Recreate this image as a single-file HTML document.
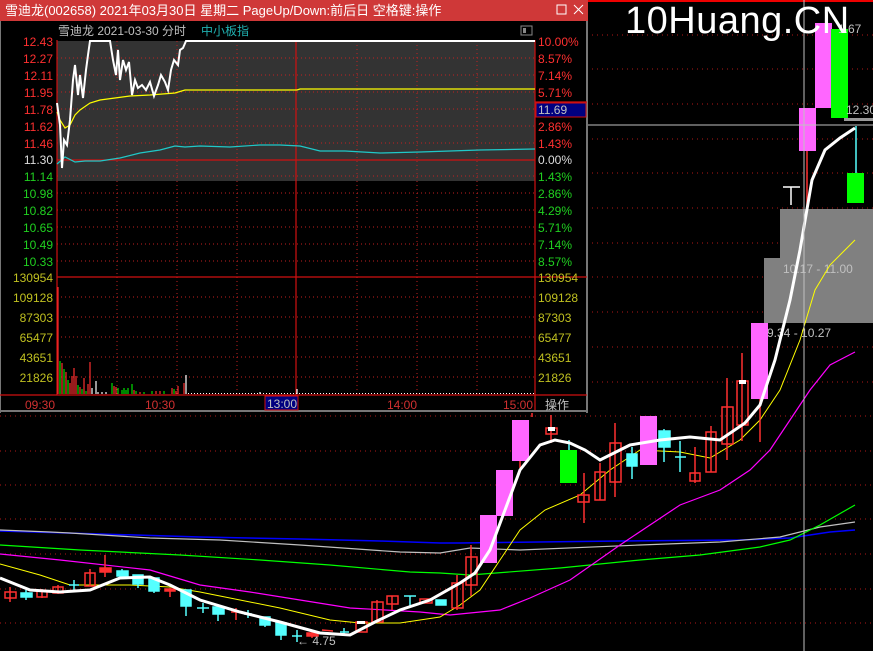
<!DOCTYPE html>
<html><head><meta charset="utf-8"><style>
html,body{margin:0;padding:0;background:#000;width:873px;height:651px;overflow:hidden}
svg{display:block}
text{font-family:"Liberation Sans","Noto Sans CJK SC",sans-serif}
</style></head><body>
<svg width="873" height="651" viewBox="0 0 873 651" xmlns="http://www.w3.org/2000/svg">
<rect width="873" height="651" fill="#000"/>
<line x1="587" y1="1" x2="873" y2="1" stroke="#e00" stroke-width="2"/>
<g stroke="#b01818" stroke-width="1" stroke-dasharray="1,4">
<line x1="587" y1="35" x2="873" y2="35"/><line x1="587" y1="69" x2="873" y2="69"/><line x1="587" y1="104" x2="873" y2="104"/><line x1="587" y1="139" x2="873" y2="139"/><line x1="587" y1="173" x2="873" y2="173"/><line x1="587" y1="208" x2="873" y2="208"/><line x1="587" y1="243" x2="873" y2="243"/><line x1="587" y1="277" x2="873" y2="277"/><line x1="587" y1="312" x2="873" y2="312"/><line x1="587" y1="347" x2="873" y2="347"/><line x1="587" y1="382" x2="873" y2="382"/>
<line x1="0" y1="416" x2="873" y2="416"/><line x1="0" y1="451" x2="873" y2="451"/><line x1="0" y1="485" x2="873" y2="485"/><line x1="0" y1="519" x2="873" y2="519"/><line x1="0" y1="554" x2="873" y2="554"/><line x1="0" y1="589" x2="873" y2="589"/><line x1="0" y1="623" x2="873" y2="623"/>
</g>
<rect x="780" y="209" width="93" height="49" fill="#808080"/>
<rect x="764" y="258" width="109" height="65" fill="#808080"/>
<text x="783" y="273" font-size="12" fill="#c0c0c0">10.17 - 11.00</text>
<text x="767" y="337" font-size="12" fill="#c0c0c0">9.34 - 10.27</text>
<g fill="none">
<polyline stroke="#0000ff" stroke-width="1.5" points="0,531 100,534 200,537 300,539 380,541 440,543 460,543 620,541 740,540 790,538 830,532 855,530"/>
<polyline stroke="#c0c0c0" stroke-width="1.2" points="0,530 50,532 70,533 150,538 220,540 300,545 400,552 440,553 470,548 520,550 640,545 720,542 780,537 820,527 855,522"/>
<polyline stroke="#00ff00" stroke-width="1.2" points="0,545 80,550 180,555 260,560 330,565 410,572 440,573 470,575 560,568 640,560 700,555 760,547 790,540 820,525 855,505"/>
<polyline stroke="#ff00ff" stroke-width="1.2" points="0,554 60,560 150,570 200,585 250,592 300,600 350,608 420,612 450,615 480,612 500,610 530,598 570,580 620,545 680,505 720,490 750,470 770,450 790,420 810,390 830,365 855,352"/>
<polyline stroke="#ffff00" stroke-width="1" points="0,564 40,575 70,585 130,585 170,587 200,592 240,600 280,608 330,620 360,623 400,623 440,617 460,605 480,590 500,560 520,530 545,510 580,495 610,470 640,450 680,452 710,458 740,440 760,420 780,390 800,340 815,290 830,265 845,250 855,240"/>
</g>
<g stroke-width="1.5">
<g stroke="#ff3030" fill="none">
<line x1="10" y1="587" x2="10" y2="602"/><rect x="5" y="592" width="11" height="6"/>
<line x1="42" y1="589" x2="42" y2="598"/><rect x="37" y="591" width="10" height="6"/>
<line x1="58" y1="585" x2="58" y2="594"/><rect x="53" y="587" width="10" height="6"/>
<line x1="90" y1="569" x2="90" y2="586"/><rect x="85" y="573" width="10" height="13"/>
<line x1="105" y1="555" x2="105" y2="577"/><rect x="100" y="568" width="11" height="4" fill="#ff3030"/>
<line x1="170" y1="588" x2="170" y2="597"/><rect x="165" y="589" width="10" height="2" fill="#ff3030"/>
<line x1="236" y1="608" x2="236" y2="620"/><line x1="231" y1="612" x2="242" y2="612"/>
<line x1="312" y1="632" x2="312" y2="638"/><rect x="307" y="633" width="11" height="3" fill="#ff3030"/>
<line x1="322" y1="630" x2="333" y2="631"/>
<rect x="356" y="622" width="11" height="10"/>
<line x1="377" y1="600" x2="377" y2="622"/><rect x="372" y="602" width="11" height="20"/>
<line x1="392" y1="596" x2="392" y2="610"/><rect x="387" y="596" width="11" height="8"/>
<rect x="420" y="599" width="12" height="4"/>
<line x1="457" y1="575" x2="457" y2="610"/><rect x="452" y="583" width="11" height="25"/>
<line x1="471" y1="545" x2="471" y2="596"/><rect x="466" y="557" width="11" height="28"/>
<line x1="551" y1="415" x2="551" y2="443"/><rect x="546" y="428" width="11" height="6"/>
<line x1="584" y1="473" x2="584" y2="523"/><rect x="578" y="495" width="11" height="7"/>
<line x1="600" y1="463" x2="600" y2="500"/><rect x="595" y="472" width="10" height="28"/>
<line x1="615" y1="423" x2="615" y2="497"/><rect x="610" y="443" width="11" height="39"/>
<line x1="695" y1="447" x2="695" y2="483"/><rect x="690" y="473" width="10" height="8"/>
<line x1="711" y1="426" x2="711" y2="472"/><rect x="706" y="432" width="10" height="40"/>
<line x1="727" y1="378" x2="727" y2="460"/><rect x="722" y="407" width="11" height="37"/>
<line x1="742" y1="353" x2="742" y2="441"/><rect x="737" y="381" width="11" height="44"/>
<line x1="760" y1="399" x2="760" y2="442"/>
<line x1="807" y1="151" x2="807" y2="209"/>
</g>
<g fill="#fff" stroke="none">
<rect x="357" y="621" width="8" height="3"/><rect x="548" y="427" width="7" height="4"/><rect x="739" y="380" width="7" height="4"/>
</g>
<g stroke="#55ffff" fill="#55ffff">
<line x1="26" y1="590" x2="26" y2="600"/><rect x="21" y="593" width="11" height="4"/>
<line x1="74" y1="580" x2="74" y2="590"/><line x1="69" y1="585" x2="79" y2="585"/>
<line x1="122" y1="569" x2="122" y2="579"/><rect x="117" y="571" width="11" height="5"/>
<line x1="138" y1="575" x2="138" y2="588"/><rect x="133" y="575" width="10" height="9"/>
<line x1="154" y1="578" x2="154" y2="593"/><rect x="149" y="578" width="10" height="13"/>
<line x1="186" y1="590" x2="186" y2="616"/><rect x="181" y="590" width="10" height="16"/>
<line x1="203" y1="603" x2="203" y2="613"/><line x1="197" y1="608" x2="209" y2="608"/>
<line x1="218" y1="607" x2="218" y2="621"/><rect x="213" y="607" width="11" height="7"/>
<line x1="248" y1="610" x2="248" y2="618"/><line x1="244" y1="614" x2="252" y2="614"/>
<line x1="265" y1="617" x2="265" y2="627"/><rect x="260" y="617" width="10" height="8"/>
<line x1="281" y1="623" x2="281" y2="640"/><rect x="276" y="623" width="10" height="12"/>
<line x1="297" y1="630" x2="297" y2="642"/><line x1="292" y1="636" x2="302" y2="636"/>
<line x1="344" y1="628" x2="344" y2="636"/><line x1="340" y1="632" x2="349" y2="632"/>
<line x1="410" y1="596" x2="410" y2="607"/><line x1="404" y1="596" x2="416" y2="596"/>
<rect x="436" y="600" width="10" height="5"/>
<line x1="632" y1="447" x2="632" y2="479"/><rect x="627" y="454" width="10" height="12"/>
<line x1="664" y1="429" x2="664" y2="462"/><rect x="659" y="431" width="11" height="16"/>
<line x1="680" y1="441" x2="680" y2="472"/><line x1="675" y1="457" x2="686" y2="457"/>
<line x1="856" y1="126" x2="856" y2="173"/>
<line x1="569" y1="440" x2="569" y2="450"/>
</g>
<g fill="#ff66ff" stroke="none">
<rect x="480" y="515" width="17" height="48"/>
<rect x="496" y="470" width="17" height="46"/>
<rect x="512" y="420" width="17" height="41"/>
<rect x="640" y="416" width="17" height="49"/>
<rect x="751" y="323" width="17" height="76"/>
<rect x="799" y="108" width="17" height="43"/>
<rect x="815" y="23" width="17" height="85"/>
</g>
<g stroke="#ff3030"><line x1="520" y1="461" x2="520" y2="468"/><line x1="532" y1="412" x2="532" y2="417"/></g>
<g fill="#00ff00" stroke="none">
<rect x="560" y="450" width="17" height="33"/>
<rect x="831" y="29" width="17" height="89"/>
<rect x="847" y="173" width="17" height="30"/>
</g>
</g>
<line x1="783" y1="187" x2="800" y2="187" stroke="#fff" stroke-width="1.5"/><line x1="791" y1="187" x2="791" y2="205" stroke="#fff" stroke-width="1.5"/>
<polyline fill="none" stroke="#fff" stroke-width="3" points="0,578 30,590 60,592 90,590 120,578 150,577 170,585 200,600 240,612 280,622 320,633 350,635 375,622 400,610 430,600 460,583 475,573 490,550 505,510 520,470 540,445 555,440 570,443 585,450 600,460 610,455 630,445 660,440 690,437 720,440 745,423 760,405 775,360 790,300 800,250 812,180 825,150 840,138 855,128"/>
<line x1="804" y1="0" x2="804" y2="651" stroke="#c0c0c0" stroke-width="1"/>
<line x1="587" y1="125" x2="873" y2="125" stroke="#c0c0c0" stroke-width="1"/>
<rect x="844" y="118" width="29" height="3" fill="#999"/>
<text x="846" y="114" font-size="12" fill="#c0c0c0">12.30</text>
<text x="838" y="33" font-size="12" fill="#c0c0c0">1.67</text>
<text x="297" y="645" font-size="12" fill="#c0c0c0">← 4.75</text>
<text x="625" y="33" font-size="38" fill="#fff" letter-spacing="0.5">10Huang.CN</text>

<rect x="0" y="0" width="588" height="413" fill="#000"/>
<rect x="0" y="0" width="588" height="21" fill="#cf3838"/>
<text x="5" y="15" font-size="13" fill="#fff">雪迪龙(002658)  2021年03月30日  星期二  PageUp/Down:前后日  空格键:操作</text>
<rect x="557" y="5" width="9" height="9" fill="none" stroke="#fff" stroke-width="1"/>
<path d="M574 5 L583 14 M583 5 L574 14" stroke="#fff" stroke-width="1"/>
<rect x="586" y="21" width="2" height="392" fill="#777"/>
<rect x="0" y="410" width="588" height="2" fill="#777"/>
<rect x="0" y="21" width="1" height="392" fill="#777"/>
<text x="58" y="35" font-size="12" fill="#c0c0c0">雪迪龙  2021-03-30 分时</text>
<text x="201" y="35" font-size="12" fill="#20b0b0">中小板指</text>
<rect x="521" y="26" width="11" height="9" fill="none" stroke="#888"/><rect x="523" y="28" width="3" height="5" fill="#888"/>
<rect x="57" y="41" width="478" height="140" fill="#333"/>
<g stroke="#c02020" stroke-width="1" stroke-dasharray="1,3">
<line x1="57" y1="58" x2="535" y2="58"/><line x1="57" y1="75" x2="535" y2="75"/><line x1="57" y1="92" x2="535" y2="92"/><line x1="57" y1="109" x2="535" y2="109"/><line x1="57" y1="126" x2="535" y2="126"/><line x1="57" y1="143" x2="535" y2="143"/><line x1="57" y1="176" x2="535" y2="176"/><line x1="57" y1="193" x2="535" y2="193"/><line x1="57" y1="210" x2="535" y2="210"/><line x1="57" y1="227" x2="535" y2="227"/><line x1="57" y1="244" x2="535" y2="244"/><line x1="57" y1="261" x2="535" y2="261"/>
<line x1="57" y1="297" x2="535" y2="297"/><line x1="57" y1="317" x2="535" y2="317"/><line x1="57" y1="337" x2="535" y2="337"/><line x1="57" y1="357" x2="535" y2="357"/><line x1="57" y1="377" x2="535" y2="377"/>
<line x1="117" y1="41" x2="117" y2="394"/><line x1="177" y1="41" x2="177" y2="394"/><line x1="237" y1="41" x2="237" y2="394"/><line x1="357" y1="41" x2="357" y2="394"/><line x1="417" y1="41" x2="417" y2="394"/><line x1="477" y1="41" x2="477" y2="394"/>
</g>
<g stroke="#d01010" stroke-width="1.2">
<line x1="57" y1="160" x2="535" y2="160"/><line x1="57" y1="277" x2="587" y2="277"/><line x1="0" y1="395" x2="587" y2="395"/>
<line x1="57" y1="40" x2="57" y2="395"/><line x1="535" y1="40" x2="535" y2="410"/><line x1="296" y1="41" x2="296" y2="395"/>
<line x1="535" y1="102" x2="587" y2="102"/>
</g>
<polyline fill="none" stroke="#ffff00" stroke-width="1.2" points="57,112 60,120 65,128 70,125 75,115 80,110 90,103 100,100 115,98 130,96 150,95 175,93 185,90 297,90 300,89 535,89"/>
<polyline fill="none" stroke="#20c8c8" stroke-width="1.2" points="57,164 65,157 75,162 85,161 100,161 120,158 140,153 160,150 175,146 185,147 200,146 230,147 260,145 280,145 300,146 320,151 345,151 380,153 420,152 450,151 480,150 535,149"/>
<polyline fill="none" stroke="#fff" stroke-width="2" points="57,103 60,125 62,168 64,140 67,145 70,120 73,80 75,65 78,95 80,75 83,98 86,70 88,55 90,41 110,41 113,60 116,75 118,50 120,80 123,60 126,70 129,62 132,95 135,80 138,88 142,85 146,90 150,82 154,96 158,85 161,75 165,82 168,90 171,70 174,60 178,65 180,50 183,48 186,41 535,41"/>
<g stroke-width="1.2">
<g stroke="#ff3030"><line x1="58" y1="394" x2="58" y2="287"/><line x1="62" y1="394" x2="62" y2="363"/><line x1="66" y1="394" x2="66" y2="372"/><line x1="70" y1="394" x2="70" y2="383"/><line x1="72" y1="394" x2="72" y2="376"/><line x1="74" y1="394" x2="74" y2="368"/><line x1="76" y1="394" x2="76" y2="376"/><line x1="80" y1="394" x2="80" y2="387"/><line x1="84" y1="394" x2="84" y2="378"/><line x1="88" y1="394" x2="88" y2="384"/><line x1="90" y1="394" x2="90" y2="362"/><line x1="134" y1="394" x2="134" y2="390"/><line x1="140" y1="394" x2="140" y2="392"/><line x1="156" y1="394" x2="156" y2="391"/><line x1="160" y1="394" x2="160" y2="391"/><line x1="172" y1="394" x2="172" y2="388"/><line x1="176" y1="394" x2="176" y2="391"/><line x1="178" y1="394" x2="178" y2="386"/><line x1="184" y1="394" x2="184" y2="383"/><line x1="114" y1="394" x2="114" y2="386"/><line x1="116" y1="394" x2="116" y2="387"/></g>
<g stroke="#00e000"><line x1="60" y1="394" x2="60" y2="361"/><line x1="64" y1="394" x2="64" y2="369"/><line x1="68" y1="394" x2="68" y2="380"/><line x1="78" y1="394" x2="78" y2="385"/><line x1="82" y1="394" x2="82" y2="389"/><line x1="86" y1="394" x2="86" y2="391"/><line x1="112" y1="394" x2="112" y2="383"/><line x1="118" y1="394" x2="118" y2="388"/><line x1="122" y1="394" x2="122" y2="390"/><line x1="124" y1="394" x2="124" y2="388"/><line x1="126" y1="394" x2="126" y2="390"/><line x1="128" y1="394" x2="128" y2="388"/><line x1="132" y1="394" x2="132" y2="384"/><line x1="136" y1="394" x2="136" y2="391"/><line x1="144" y1="394" x2="144" y2="392"/><line x1="152" y1="394" x2="152" y2="391"/><line x1="164" y1="394" x2="164" y2="391"/><line x1="174" y1="394" x2="174" y2="389"/></g>
<g stroke="#fff"><line x1="92" y1="394" x2="92" y2="388"/><line x1="96" y1="394" x2="96" y2="381"/><line x1="98" y1="394" x2="98" y2="392"/><line x1="102" y1="394" x2="102" y2="392"/><line x1="106" y1="394" x2="106" y2="392"/><line x1="186" y1="394" x2="186" y2="375"/><line x1="260" y1="394" x2="260" y2="392"/><line x1="297" y1="394" x2="297" y2="389"/></g>
<line x1="188" y1="393.5" x2="535" y2="393.5" stroke="#fff" stroke-width="1" stroke-dasharray="1,2"/>
</g>
<g font-size="12" text-anchor="end">
<text x="53" y="46" fill="#ff3030">12.43</text><text x="53" y="63" fill="#ff3030">12.27</text><text x="53" y="80" fill="#ff3030">12.11</text><text x="53" y="97" fill="#ff3030">11.95</text><text x="53" y="114" fill="#ff3030">11.78</text><text x="53" y="131" fill="#ff3030">11.62</text><text x="53" y="148" fill="#ff3030">11.46</text>
<text x="53" y="164" fill="#dddddd">11.30</text>
<text x="53" y="181" fill="#20d020">11.14</text><text x="53" y="198" fill="#20d020">10.98</text><text x="53" y="215" fill="#20d020">10.82</text><text x="53" y="232" fill="#20d020">10.65</text><text x="53" y="249" fill="#20d020">10.49</text><text x="53" y="266" fill="#20d020">10.33</text>
<text x="53" y="282" fill="#c0c020">130954</text><text x="53" y="302" fill="#c0c020">109128</text><text x="53" y="322" fill="#c0c020">87303</text><text x="53" y="342" fill="#c0c020">65477</text><text x="53" y="362" fill="#c0c020">43651</text><text x="53" y="382" fill="#c0c020">21826</text>
</g>
<g font-size="12">
<text x="538" y="46" fill="#ff3030">10.00%</text><text x="538" y="63" fill="#ff3030">8.57%</text><text x="538" y="80" fill="#ff3030">7.14%</text><text x="538" y="97" fill="#ff3030">5.71%</text>
<rect x="536" y="103" width="50" height="14" fill="#000080" stroke="#d01010"/>
<text x="538" y="114" fill="#c0c0c0">11.69</text>
<text x="538" y="131" fill="#ff3030">2.86%</text><text x="538" y="148" fill="#ff3030">1.43%</text><text x="538" y="164" fill="#dddddd">0.00%</text>
<text x="538" y="181" fill="#20d020">1.43%</text><text x="538" y="198" fill="#20d020">2.86%</text><text x="538" y="215" fill="#20d020">4.29%</text><text x="538" y="232" fill="#20d020">5.71%</text><text x="538" y="249" fill="#20d020">7.14%</text><text x="538" y="266" fill="#20d020">8.57%</text>
<text x="538" y="282" fill="#c0c020">130954</text><text x="538" y="302" fill="#c0c020">109128</text><text x="538" y="322" fill="#c0c020">87303</text><text x="538" y="342" fill="#c0c020">65477</text><text x="538" y="362" fill="#c0c020">43651</text><text x="538" y="382" fill="#c0c020">21826</text>
<text x="25" y="409" fill="#d03030">09:30</text><text x="145" y="409" fill="#d03030">10:30</text>
<rect x="265" y="396" width="33" height="14" fill="#000080" stroke="#d01010"/>
<text x="267" y="408" fill="#c0c0c0">13:00</text>
<text x="387" y="409" fill="#d03030">14:00</text><text x="503" y="409" fill="#d03030">15:00</text>
<text x="545" y="409" fill="#c0c0c0">操作</text>
</g>
</svg>
</body></html>
